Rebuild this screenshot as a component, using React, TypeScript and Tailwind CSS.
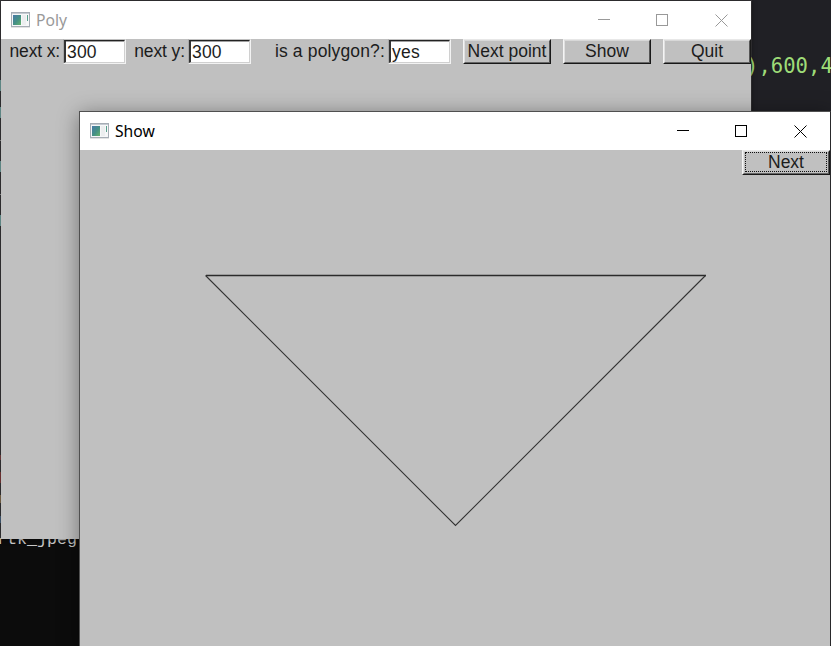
import type { ReactNode } from 'react';

const ui = "font-['Liberation_Sans',Arial,sans-serif] text-[17.5px] leading-[25px] text-[#1c1c1c] whitespace-pre";

function AppIcon() {
  return (
    <svg width="19" height="16" viewBox="0 0 19 16" className="block shrink-0">
      <defs>
        <linearGradient id="pane" x1="0" y1="0" x2="1" y2="1">
          <stop offset="0" stopColor="#4879a8" />
          <stop offset="0.55" stopColor="#459184" />
          <stop offset="1" stopColor="#67b36b" />
        </linearGradient>
      </defs>
      <rect x="0.5" y="0.5" width="18" height="14" fill="#f6f7f8" stroke="#a6adb5" />
      <path d="M1 1.5h17" stroke="#c5cbd2" />
      <path d="M0 15.5h19" stroke="#e3e3e3" />
      <rect x="2" y="3" width="8" height="10" fill="url(#pane)" />
      <rect x="11" y="3" width="4" height="10" fill="#eceeef" />
      <path d="M16.5 3v6" stroke="#58a08c" />
    </svg>
  );
}

function TitleBar({ title, active }: { title: string; active?: boolean }) {
  return (
    <div className={`flex h-[38px] items-center bg-white pl-[10px] ${active ? 'pb-px text-black' : 'text-[#999]'}`}>
      <AppIcon />
      <span className="ml-[6px] grow font-['Noto_Sans','Open_Sans',sans-serif] text-[15.7px] leading-[36px]">{title}</span>
      <svg width="153" height="38" viewBox="0 0 153 38" fill="none" stroke="currentColor" className="block shrink-0">
        <path d="M0 18.5h12M58.5 13.5h11v11h-11z" shapeRendering="crispEdges" />
        <path d="M117.5 13.5l12 12M129.5 13.5l-12 12" />
      </svg>
    </div>
  );
}

function Field({ value }: { value: string }) {
  return (
    <div className="h-[25px] w-[63px] border border-t-[#c0c0c0] border-l-[#a8a8a8] border-r-[#f2f2f2] border-b-[#f2f2f2]">
      <div className="h-[23px] border-t border-l-2 border-r border-b border-t-[#222] border-l-[#333] border-r-[#d0d0d0] border-b-[#d0d0d0] bg-white">
        <div className="h-[21px] border-t border-[#a0a0a0]">
          <div className={`${ui} -mt-[2px] pl-px tracking-[0.2px]`}>{value}</div>
        </div>
      </div>
    </div>
  );
}

function Button({ children, focused }: { children: ReactNode; focused?: boolean }) {
  return (
    <div className="h-[25px] w-[88px] shrink-0 border border-t-[#e8e8e8] border-l-[#f4f4f4] border-r-[#181818] border-b-[#181818]">
      <div className="h-[23px] border border-t-[#d8d8d8] border-l-[#e0e0e0] border-r-[#555] border-b-[#666] bg-[#c0c0c0]">
        <div className={`h-[20px] border border-dotted ${focused ? 'ml-px mr-px border-[#111]' : 'border-transparent'}`}>
          <div className={`${ui} -mt-[3px] flex justify-center`}>{children}</div>
        </div>
      </div>
    </div>
  );
}

const edgeMarks = [
  [80, 11, 'bg-[#77aaa8]'],
  [107, 11, 'bg-[#77aaa8]'],
  [140, 1, 'bg-[#999]'],
  [161, 11, 'bg-[#77aaa8]'],
  [194, 1, 'bg-[#999]'],
  [215, 11, 'bg-[#77aaa8]'],
  [455, 5, 'bg-[#804545]'],
  [472, 11, 'bg-[#853c3c]'],
  [495, 8, 'bg-[#8b7352]'],
  [516, 7, 'bg-[#4b6682]'],
] as const;

export default function App() {
  return (
    <div className="relative h-[646px] w-[831px] overflow-hidden bg-[#202025]">
      <div className="absolute top-0 left-0 h-[539px] w-[752px] bg-[#39373a]" />
      {edgeMarks.map(([top, height, color]) => (
        <div key={top} className={`absolute left-0 w-px ${color}`} style={{ top, height }} />
      ))}
      <div className="absolute top-[538px] left-0 h-[108px] w-[80px] overflow-hidden bg-[#0c0c0c]">
        <span className="absolute -top-[10px] -left-[3px] font-['Liberation_Mono',monospace] text-[16.7px] leading-[24px] text-[#c8c8c8]">rtk_jpeg</span>
      </div>
      <span className="absolute top-[52px] left-[746px] font-['DejaVu_Sans_Mono',monospace] text-[20.6px] leading-[28px] text-[#9edc78] whitespace-pre">),600,4</span>

      <div className="absolute top-px left-px h-[538px] w-[750px] bg-[#c0c0c0] shadow-[0_0_5px_rgba(0,0,0,0.5)]">
        <TitleBar title="Poly" />
        <div className="flex h-[25px]">
          <div className={`${ui} w-[62px] pr-[3px] text-right tracking-[-0.15px]`}>next x:</div>
          <Field value="300" />
          <div className={`${ui} w-[62px] pr-[3px] text-right tracking-[-0.1px]`}>next y:</div>
          <Field value="300" />
          <div className={`${ui} w-[137px] pr-[3px] text-right tracking-[0.15px]`}>is a polygon?:</div>
          <Field value="yes" />
          <div className="ml-[12px] flex gap-3">
            <Button>Next point</Button>
            <Button>Show</Button>
            <Button>Quit</Button>
          </div>
        </div>
      </div>

      <div className="absolute top-[111px] left-[79px] h-[536px] w-[752px] border border-[#505050] border-r-[#29292b] bg-[#c0c0c0] shadow-[0_3px_20px_rgba(0,0,0,0.4)]">
        <TitleBar title="Show" active />
        <div className="flex justify-end">
          <Button focused>Next</Button>
        </div>
        <svg width="750" height="471" viewBox="0 0 750 471" fill="none" className="block">
          <path d="M126 100.5h500" stroke="#2b2b2b" strokeWidth="1.3" />
          <path d="M125.5 100.5l250 250l250-250" stroke="#333" strokeWidth="1.1" />
        </svg>
      </div>
    </div>
  );
}
